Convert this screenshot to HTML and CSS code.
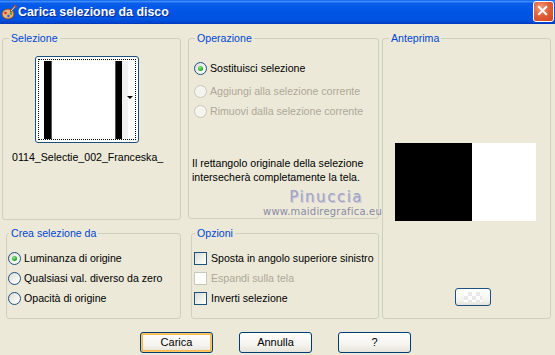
FILE: index.html
```html
<!DOCTYPE html>
<html lang="it">
<head>
<meta charset="utf-8">
<title>Carica selezione da disco</title>
<link rel="stylesheet" href="styles.css">
</head>
<body>
<div class="window">
  <div class="titlebar">
    <svg class="app-icon" viewBox="0 0 16 16" width="16" height="16">
      <ellipse cx="7" cy="10" rx="6" ry="5" fill="#E9B27A" stroke="#8A4B1E" stroke-width="1"/>
      <circle cx="4.5" cy="9" r="1.3" fill="#E03020"/>
      <circle cx="7.5" cy="12" r="1.3" fill="#2A60D0"/>
      <circle cx="10" cy="9.5" r="1.2" fill="#30A040"/>
      <path d="M9 7 L14 1.5 L15 2.5 L10 8 Z" fill="#F4F0E0" stroke="#6A3A10" stroke-width="0.8"/>
      <path d="M13.5 1 L15.5 3" stroke="#D04020" stroke-width="1.5"/>
    </svg>
    <span class="title">Carica selezione da disco</span>
    <div class="close">
      <svg viewBox="0 0 21 21" width="19" height="19">
        <path d="M5.5 5.5 L13.5 13.5 M13.5 5.5 L5.5 13.5" stroke="#fff" stroke-width="2.2" stroke-linecap="square"/>
      </svg>
    </div>
  </div>

  <div class="content">
    <div class="groups">
      <fieldset class="group g-sel">
        <legend>Selezione</legend>
        <div class="thumb">
          <div class="thumb-inner">
            <div class="thumb-img">
              <span class="bar bar-1"></span>
              <span class="white-mid"></span>
              <span class="bar bar-2"></span>
              <span class="gray-strip"></span>
            </div>
            <span class="drop-arrow"></span>
          </div>
        </div>
        <div class="filename">0114_Selectie_002_Franceska_</div>
      </fieldset>

      <fieldset class="group g-op">
        <legend>Operazione</legend>
        <div class="option op-1"><span class="radio checked"></span><span>Sostituisci selezione</span></div>
        <div class="option op-2 disabled"><span class="radio"></span><span>Aggiungi alla selezione corrente</span></div>
        <div class="option op-3 disabled"><span class="radio"></span><span>Rimuovi dalla selezione corrente</span></div>
        <p class="note">Il rettangolo originale della selezione intersecherà completamente la tela.</p>
      </fieldset>

      <fieldset class="group g-prev">
        <legend>Anteprima</legend>
        <div class="preview"><span class="pv-black"></span><span class="pv-white"></span></div>
        <div class="mini-btn"><span class="checker"></span></div>
      </fieldset>

      <fieldset class="group g-crea">
        <legend>Crea selezione da</legend>
        <div class="option c-1"><span class="radio checked"></span><span>Luminanza di origine</span></div>
        <div class="option c-2"><span class="radio"></span><span>Qualsiasi val. diverso da zero</span></div>
        <div class="option c-3"><span class="radio"></span><span>Opacità di origine</span></div>
      </fieldset>

      <fieldset class="group g-opz">
        <legend>Opzioni</legend>
        <div class="option k-1"><span class="check"></span><span>Sposta in angolo superiore sinistro</span></div>
        <div class="option k-2 disabled"><span class="check"></span><span>Espandi sulla tela</span></div>
        <div class="option k-3"><span class="check"></span><span>Inverti selezione</span></div>
      </fieldset>
    </div>

    <div class="buttons">
      <div class="btn default">Carica</div>
      <div class="btn">Annulla</div>
      <div class="btn">?</div>
    </div>
  </div>

  <div class="watermark">
    <div class="wm-name">Pinuccia</div>
    <div class="wm-url">www.maidiregrafica.eu</div>
  </div>
</div>
</body>
</html>
```

FILE: styles.css
```css
* { box-sizing: border-box; }
html, body { margin: 0; padding: 0; }
body {
  width: 555px;
  height: 355px;
  overflow: hidden;
  background: #ECE9D8;
  font-family: "Liberation Sans", Tahoma, sans-serif;
  font-size: 10.6px;
  color: #000;
}
.window {
  position: relative;
  width: 555px;
  height: 355px;
  background: #ECE9D8;
}

/* title bar */
.titlebar {
  height: 24px;
  display: flex;
  align-items: center;
  padding-left: 1px;
  background: linear-gradient(to bottom, #0A5FEA 0%, #3C8CF8 6%, #0A5DEA 14%, #0055E6 45%, #0053E2 80%, #0048D2 92%, #0037B8 100%);
}
.app-icon { width: 16px; height: 16px; margin-right: 1px; flex: none; }
.title {
  flex: 1;
  color: #fff;
  font-family: "Liberation Sans", sans-serif;
  font-weight: bold;
  font-size: 12.4px;
  text-shadow: 1px 1px 0 #0A2A8C;
}
.close {
  width: 21px;
  height: 21px;
  margin-right: 1px;
  margin-top: -2px;
  border: 1px solid #fff;
  border-radius: 3px;
  background: radial-gradient(circle at 35% 30%, #F0A080 0%, #E2603A 45%, #CC4520 100%);
  display: flex;
  align-items: center;
  justify-content: center;
}

/* content */
.content {
  padding: 8px 0 0 2px;
}
.groups {
  display: grid;
  grid-template-columns: 186px 194px 169px;
  grid-template-rows: 188px 92px;
  row-gap: 7px;
}
.group {
  margin: 0;
  padding: 0;
  min-width: 0;
  border: 1px solid #D0D0BF;
  border-radius: 3px;
  height: 100%;
}
.group legend {
  color: #0046D5;
  padding: 0 2px;
  margin-left: 6px;
  line-height: 13px;
  font-size: 10.6px;
}
.g-sel { width: 179px; grid-column: 1; grid-row: 1; }
.g-op { width: 191px; grid-column: 2; grid-row: 1; height: 187px; }
.g-prev { width: 169px; grid-column: 3; grid-row: 1 / span 2; }
.g-crea { width: 175px; grid-column: 1; grid-row: 2; margin-left: 4px; }
.g-crea legend { margin-left: 2px; }
.g-opz { width: 188px; grid-column: 2; grid-row: 2; margin-left: 3px; }
.g-opz legend { margin-left: 3px; }

/* selection thumbnail */
.thumb {
  margin: 11px 0 0 32px;
  width: 104px;
  height: 87px;
  border: 1px solid #1C5180;
  border-radius: 3px;
  background: #fff;
  padding: 2px;
}
.thumb-inner {
  position: relative;
  width: 100%;
  height: 100%;
  border: 1px dotted #000;
  padding: 1px 0 0 5px;
}
.thumb-img {
  display: flex;
  height: 78px;
  width: 84px;
}
.bar { background: #000; width: 8px; height: 100%; }
.bar-1 { box-shadow: inset -1px 0 0 #555; }
.bar-2 { width: 7px; box-shadow: inset 1px 0 0 #555; }
.white-mid { background: #fff; width: 63px; }
.gray-strip { background: #F0F0F0; width: 6px; }
.drop-arrow {
  position: absolute;
  right: 2px;
  top: 36px;
  width: 0;
  height: 0;
  border-left: 3px solid transparent;
  border-right: 3px solid transparent;
  border-top: 3px solid #000;
}
.filename {
  margin: 8px 0 0 9px;
  line-height: 13px;
  white-space: nowrap;
}

/* options */
.option {
  display: flex;
  align-items: center;
  height: 13px;
  line-height: 13px;
  white-space: nowrap;
}
.option.disabled { color: #ACA899; }
.radio {
  flex: none;
  width: 13px;
  height: 13px;
  border-radius: 50%;
  border: 1px solid #1C5180;
  background: linear-gradient(135deg, #DCDCD6 0%, #F4F4F0 60%, #fff 100%);
  margin-right: 3px;
  position: relative;
}
.radio.checked::after {
  content: "";
  position: absolute;
  left: 3px;
  top: 3px;
  width: 5px;
  height: 5px;
  border-radius: 50%;
  background: radial-gradient(circle at 40% 35%, #8EE88E 0%, #2DB42D 55%, #1A8F1A 100%);
}
.disabled .radio { border-color: #CAC8BB; background: #F5F4EE; }
.check {
  flex: none;
  width: 13px;
  height: 13px;
  border: 1px solid #1C5180;
  background: linear-gradient(135deg, #DCDCD6 0%, #F2F2EE 60%, #fff 100%);
  margin-right: 4px;
}
.disabled .check { border-color: #CAC8BB; background: #fff; }

.op-1 { margin: 17px 0 0 5px; }
.op-2 { margin: 10px 0 0 5px; }
.op-3 { margin: 7px 0 0 5px; }
.note {
  margin: 38px 0 0 3px;
  line-height: 14px;
  width: 180px;
}

.c-1 { margin: 12px 0 0 1px; }
.c-2 { margin: 7px 0 0 1px; }
.c-3 { margin: 7px 0 0 1px; }

.k-1 { margin: 12px 0 0 2px; }
.k-2 { margin: 7px 0 0 2px; }
.k-3 { margin: 7px 0 0 2px; }

/* preview */
.preview {
  display: flex;
  margin: 98px 0 0 12px;
  height: 78px;
  width: 141px;
}
.pv-black { background: #000; width: 77px; }
.pv-white { background: #fff; width: 64px; }
.mini-btn {
  margin: 67px 0 0 72px;
  width: 36px;
  height: 18px;
  border: 1px solid #1C5180;
  border-radius: 3px;
  background: linear-gradient(to bottom, #fff 0%, #F3F3EF 70%, #E4E3DA 100%);
  display: flex;
  align-items: center;
  justify-content: center;
}
.checker {
  width: 18px;
  height: 10px;
  background:
    repeating-conic-gradient(#E6E6E6 0 25%, #fff 0 50%) 0 0 / 8px 8px;
  opacity: 0.9;
}

/* buttons */
.buttons {
  display: flex;
  gap: 26px;
  margin: 13px 0 0 138px;
}
.btn {
  width: 73px;
  height: 21px;
  border: 1px solid #003C74;
  border-radius: 3px;
  background: linear-gradient(to bottom, #FFFFFF 0%, #F5F4EF 60%, #E6E4DA 100%);
  display: flex;
  align-items: center;
  justify-content: center;
  line-height: 13px;
  font-size: 11px;
}
.btn.default {
  box-shadow: inset 0 0 0 1px #FFC76A, inset 0 0 0 2px #F6B94C;
}

/* watermark overlay */
.watermark {
  position: absolute;
  left: 260px;
  top: 188px;
  width: 122px;
  text-align: right;
  pointer-events: none;
}
.wm-name {
  font-family: "DejaVu Sans", sans-serif;
  font-size: 15px;
  line-height: 18px;
  color: #A3A3C4;
  letter-spacing: 1.5px;
  padding-right: 19px;
  text-shadow: 1px 1px 0 #C8C8D8;
}
.wm-url {
  font-family: "DejaVu Sans", sans-serif;
  font-size: 10px;
  line-height: 12px;
  color: #8A8AA6;
  letter-spacing: 0.2px;
}
```
